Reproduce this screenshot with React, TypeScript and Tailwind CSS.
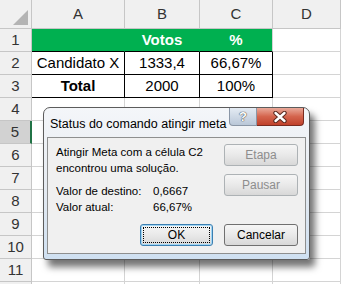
import React from 'react';

const grid = 'border-[#d4d4d4]';

const cols = [
    { key: 'A', w: 'w-[93px]' },
    { key: 'B', w: 'w-[75px]' },
    { key: 'C', w: 'w-[73px]' },
    { key: 'D', w: 'flex-1' },
];

type CellData = { text?: string; bold?: boolean; green?: boolean; boxed?: boolean };

const data: Record<number, CellData[]> = {
    1: [{ green: true }, { text: 'Votos', bold: true, green: true }, { text: '%', bold: true, green: true }],
    2: [{ text: 'Candidato X', boxed: true }, { text: '1333,4', boxed: true }, { text: '66,67%', boxed: true }],
    3: [{ text: 'Total', bold: true, boxed: true }, { text: '2000', boxed: true }, { text: '100%', boxed: true }],
};

const CloseIcon = () => (
    <svg width="14" height="12" viewBox="0 0 14 12">
        <path d="M2.5 2 L11.5 10 M11.5 2 L2.5 10" stroke="#5a2a20" strokeWidth="4.4" strokeLinecap="round" />
        <path d="M2.5 2 L11.5 10 M11.5 2 L2.5 10" stroke="#ffffff" strokeWidth="2.4" strokeLinecap="round" />
    </svg>
);

const DialogButton: React.FC<{ label: string; disabled?: boolean; focused?: boolean }> = ({ label, disabled, focused }) => (
    <div
        className={`h-[22px] rounded-[3px] border flex items-center justify-center p-[2px] bg-gradient-to-b from-[#f6f6f6] via-[#e9e9e9] to-[#d8d8d8] ${
            focused ? 'border-[#3c7fb1] shadow-[inset_0_0_0_1px_#9fd5f4]' : disabled ? 'border-[#adb2b5]' : 'border-[#707070]'
        }`}
    >
        <div
            className={`w-full h-full flex items-center justify-center text-[12px] ${
                focused ? 'border border-dotted border-black' : ''
            } ${disabled ? 'text-[#8d8d8d]' : 'text-black'}`}
        >
            {label}
        </div>
    </div>
);

const App: React.FC = () => {
    const rows = Array.from({ length: 12 }, (_, i) => i + 1);

    return (
        <div className="relative w-[341px] h-[284px] overflow-hidden bg-white" style={{ fontFamily: '"Liberation Sans", Arial, sans-serif' }}>
            {/* Header row */}
            <div className="flex h-[29px] bg-[#f0f0f0] border-b border-[#c6c6c6]">
                <div className="w-[32px] border-r border-[#c6c6c6] relative">
                    <div className="absolute right-[3px] bottom-[3px] w-0 h-0 border-l-[15px] border-l-transparent border-b-[15px] border-b-[#b4b4b4]" />
                </div>
                {cols.map((c) => (
                    <div
                        key={c.key}
                        className={`${c.w} border-r border-[#c6c6c6] flex items-center justify-center text-[15px] text-[#333]`}
                    >
                        {c.key}
                    </div>
                ))}
            </div>

            {rows.map((r) => (
                <div key={r} className="flex h-[23px]">
                    <div
                        className={`w-[32px] flex items-center justify-center text-[15px] text-[#333] border-b border-[#c6c6c6] ${
                            r === 5 ? 'bg-[#d2d2d2] border-r-2 border-r-[#217346]' : 'bg-[#f0f0f0] border-r border-r-[#c6c6c6]'
                        }`}
                    >
                        {r < 12 ? r : ''}
                    </div>
                    {cols.map((c, ci) => {
                        const cell = data[r]?.[ci];
                        let cls = `border-r border-b ${grid}`;
                        if (cell?.green) cls = 'bg-[#00b050] border-b border-b-black border-r border-r-[#00b050] text-white';
                        if (cell?.green && ci === 2) cls = 'bg-[#00b050] border-b border-b-black border-r border-r-[#d4d4d4] text-white';
                        if (cell?.boxed) cls = 'border-r border-b border-black text-black';
                        return (
                            <div
                                key={c.key}
                                className={`${c.w} ${cls} flex items-center justify-center text-[15px] ${cell?.bold ? 'font-bold' : ''}`}
                            >
                                {cell?.text}
                            </div>
                        );
                    })}
                </div>
            ))}

            {/* Goal seek status dialog */}
            <div className="absolute left-[43px] top-[107px] w-[267px] h-[153px] rounded-t-[7px] rounded-b-[3px] border border-[#5c5c5c] bg-gradient-to-b from-[#f4f6f9] via-[#e6ebf1] to-[#cfe0f1] shadow-[5px_7px_7px_rgba(0,0,0,0.55)] flex flex-col px-[3px] pb-[5px]">
                <div className="h-[29px] flex items-start">
                    <div className="flex-1 pt-[7px] pl-[3px] text-[12.5px] text-black">Status do comando atingir meta</div>
                    <div className="flex mr-[2px]">
                        <div className="w-[28px] h-[18px] rounded-bl-[4px] border border-[#8a96a6] border-t-0 bg-gradient-to-b from-[#e4ebf3] to-[#b9c7d8] flex items-center justify-center">
                            <span className="text-[13px] font-bold text-white" style={{ textShadow: '0 0 1px #333, 0 0 1px #333' }}>?</span>
                        </div>
                        <div className="w-[47px] h-[18px] rounded-br-[4px] border border-[#7a2b20] border-t-0 border-l-0 bg-gradient-to-b from-[#e9a99a] via-[#d4644d] to-[#c0412b] flex items-center justify-center">
                            <CloseIcon />
                        </div>
                    </div>
                </div>
                <div className="flex-1 border border-[#8e8f8f] bg-[#f0f0f0] flex flex-col px-[8px] pt-[6px] pb-[7px]">
                    <div className="flex">
                        <div className="flex-1 text-[11.5px] text-black leading-[16px]">
                            <div>Atingir Meta com a célula C2</div>
                            <div>encontrou uma solução.</div>
                            <div className="mt-[7px] flex">
                                <span className="w-[97px]">Valor de destino:</span>
                                <span>0,6667</span>
                            </div>
                            <div className="flex">
                                <span className="w-[97px]">Valor atual:</span>
                                <span>66,67%</span>
                            </div>
                        </div>
                        <div className="w-[74px] flex flex-col gap-[8px] mr-[-1px]">
                            <DialogButton label="Etapa" disabled />
                            <DialogButton label="Pausar" disabled />
                        </div>
                    </div>
                    <div className="mt-auto flex justify-end gap-[11px] mr-[-1px]">
                        <div className="w-[73px]">
                            <DialogButton label="OK" focused />
                        </div>
                        <div className="w-[74px]">
                            <DialogButton label="Cancelar" />
                        </div>
                    </div>
                </div>
            </div>
        </div>
    );
};

export default App;
